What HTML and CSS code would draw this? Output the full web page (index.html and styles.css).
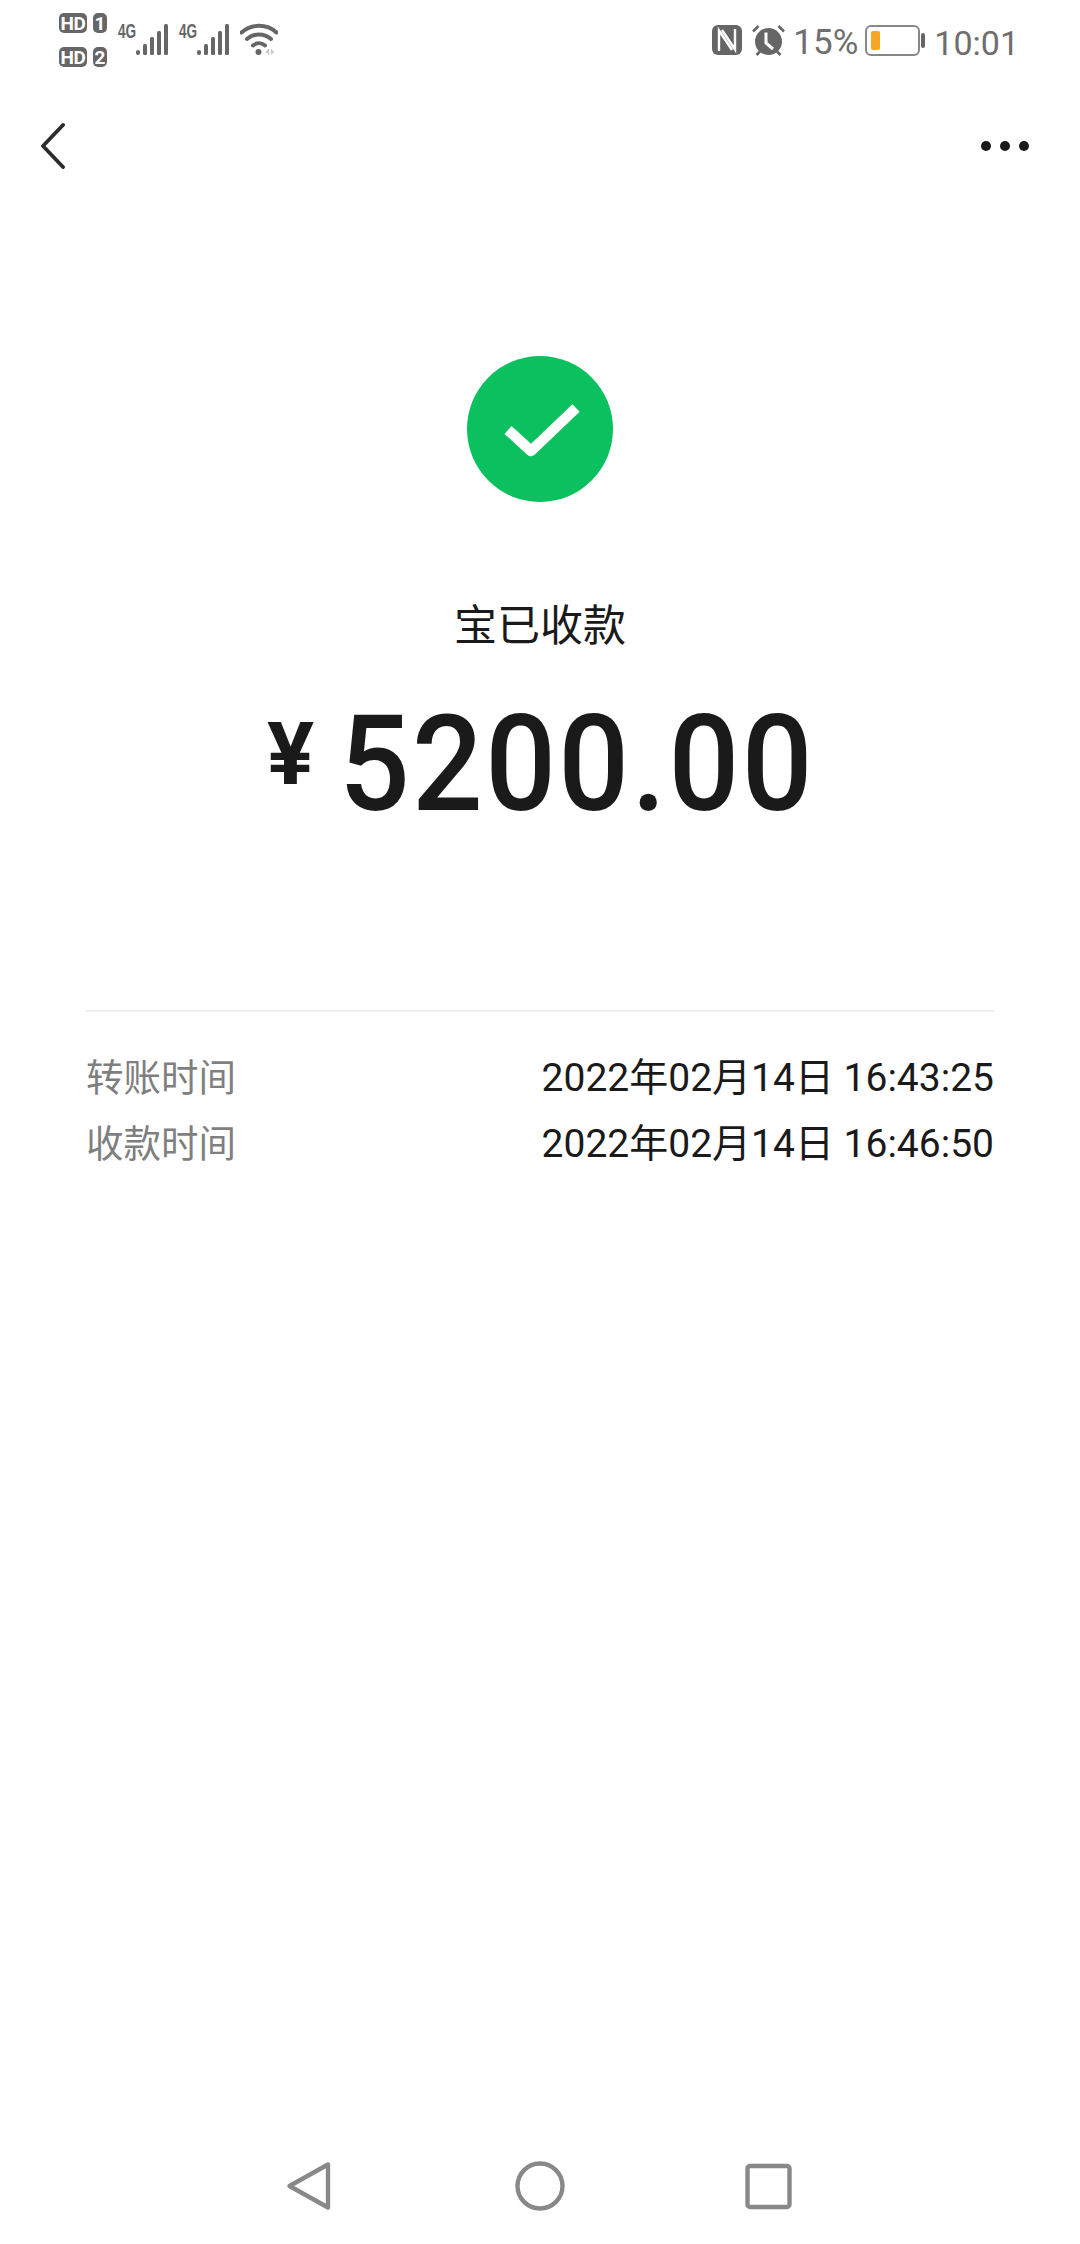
FILE: index.html
```html
<!DOCTYPE html>
<html lang="zh-CN">
<head>
  <meta charset="UTF-8">
  <meta name="viewport" content="width=device-width, initial-scale=1.0">
  <title>转账详情</title>
  <link rel="stylesheet" href="styles.css">
</head>
<body>
  <div id="app">
    <div class="status-bar">
      <div class="status-left">
        <div class="sim-list">
          <div class="sim"><span class="hd">HD</span><span class="slot">1</span></div>
          <div class="sim"><span class="hd">HD</span><span class="slot">2</span></div>
        </div>
        <div class="signal">
          <span class="net">4G</span>
          <svg class="bars" viewBox="0 0 32 32" width="32" height="32">
            <rect x="0" y="26" width="4" height="5" rx="2"/>
            <rect x="7" y="20" width="4" height="11" rx="1.5"/>
            <rect x="14" y="13" width="4" height="18" rx="1.5"/>
            <rect x="21" y="7" width="4" height="24" rx="1.5"/>
            <rect x="28" y="0" width="4" height="31" rx="1.5"/>
          </svg>
        </div>
        <div class="signal">
          <span class="net">4G</span>
          <svg class="bars" viewBox="0 0 32 32" width="32" height="32">
            <rect x="0" y="26" width="4" height="5" rx="2"/>
            <rect x="7" y="20" width="4" height="11" rx="1.5"/>
            <rect x="14" y="13" width="4" height="18" rx="1.5"/>
            <rect x="21" y="7" width="4" height="24" rx="1.5"/>
            <rect x="28" y="0" width="4" height="31" rx="1.5"/>
          </svg>
        </div>
        <svg class="wifi" viewBox="0 0 38 34" width="38" height="34">
          <path d="M1.500 9.500C11 0.500 27 0.500 36.500 9.500" fill="none" stroke="#666" stroke-width="4" stroke-linecap="round"/>
          <path d="M7 16C13.800 10 24.200 10 31 16" fill="none" stroke="#666" stroke-width="4" stroke-linecap="round"/>
          <path d="M13 22.500C16.500 19.500 21.500 19.500 25 22.500" fill="none" stroke="#666" stroke-width="4" stroke-linecap="round"/>
          <circle cx="18.500" cy="29" r="3" fill="#666"/>
          <path d="M28 26l-3 4h3zM28 26v6h1.200v-6zM31 26v6l3.500-3z" fill="#c9c9c9"/>
        </svg>
      </div>
      <div class="status-right">
        <svg class="nfc" viewBox="0 0 30 30" width="30" height="30">
          <rect width="30" height="30" rx="6" fill="#666"/>
          <path d="M7 26V5.500L20 25M23 4v20.500L10 5" fill="none" stroke="#fff" stroke-width="2.400"/>
        </svg>
        <svg class="alarm" viewBox="0 0 33 33" width="33" height="33">
          <circle cx="16.500" cy="17.500" r="13.500" fill="#666"/>
          <path d="M1 7.500L6.500 2M32 7.500L26.500 2M4.500 31l3.500-3.500M28.500 31L25 27.500" stroke="#666" stroke-width="2.600"/>
          <path d="M14 8.500v10.500l7 6" fill="none" stroke="#fff" stroke-width="3"/>
        </svg>
        <span class="percent">15%</span>
        <div class="battery">
          <div class="battery-body"><div class="battery-level"></div></div>
          <div class="battery-cap"></div>
        </div>
        <span class="clock">10:01</span>
      </div>
    </div>

    <div class="toolbar">
      <svg class="back" viewBox="0 0 24 46" width="24" height="46">
        <path d="M22 2L2 23l20 21" fill="none" stroke="#2b2b2b" stroke-width="3.800" stroke-linecap="round" stroke-linejoin="round"/>
      </svg>
      <div class="more"><span></span><span></span><span></span></div>
    </div>

    <div class="result">
      <svg class="check-circle" viewBox="0 0 146 146" width="146" height="146">
        <circle cx="73" cy="73" r="73" fill="#0ac05f"/>
        <path d="M41 74l23 21 45-43" fill="none" stroke="#fff" stroke-width="10.500" stroke-linejoin="round"/>
      </svg>
      <div class="result-title">宝已收款</div>
      <div class="amount"><span class="currency">¥</span><span class="value">5200.00</span></div>
    </div>

    <div class="details">
      <div class="detail-row">
        <span class="detail-label">转账时间</span>
        <span class="detail-value">2022年02月14日 16:43:25</span>
      </div>
      <div class="detail-row">
        <span class="detail-label">收款时间</span>
        <span class="detail-value">2022年02月14日 16:46:50</span>
      </div>
    </div>

    <div class="nav-bar">
      <svg viewBox="0 0 50 50" width="50" height="50">
        <path d="M43 3.500v43L4.500 25z" fill="none" stroke="#888" stroke-width="4.400" stroke-linejoin="round"/>
      </svg>
      <svg viewBox="0 0 50 50" width="50" height="50">
        <circle cx="25" cy="25" r="22.500" fill="none" stroke="#888" stroke-width="4.400"/>
      </svg>
      <svg viewBox="0 0 50 50" width="50" height="50">
        <rect x="2.500" y="5" width="42" height="41" rx="2.500" fill="none" stroke="#888" stroke-width="4.400"/>
      </svg>
    </div>
  </div>
</body>
</html>
```

FILE: styles.css
```css
body {
  margin: 0;
  padding: 0;
  background-color: #fff;
  font-family: Roboto, 'Noto Sans CJK SC', sans-serif;
  color: #1a1a1a;
}

#app {
  width: 1080px;
  height: 2244px;
  display: flex;
  flex-direction: column;
  overflow: hidden;
}

.status-bar {
  height: 80px;
  display: flex;
  justify-content: space-between;
  align-items: center;
  padding: 0 61px 0 59px;
  color: #666;
}

.status-left, .status-right {
  display: flex;
  align-items: center;
}

.sim-list {
  display: flex;
  flex-direction: column;
  gap: 14px;
  margin-right: 11px;
}

.sim {
  display: flex;
  gap: 6px;
}

.hd, .slot {
  height: 20px;
  line-height: 21px;
  background: #666;
  color: #fff;
  border-radius: 5px;
  font-size: 19px;
  font-weight: 700;
  text-align: center;
}

.hd {
  width: 28px;
  letter-spacing: -0.5px;
}

.slot {
  width: 14px;
}

.signal {
  display: flex;
  margin-right: 11px;
}

.bars {
  fill: #666;
}

.net {
  width: 18px;
  font-family: 'Liberation Sans', sans-serif;
  font-size: 20px;
  font-weight: 700;
  transform: scaleX(0.68);
  transform-origin: left top;
  line-height: 14px;
  color: #666;
}

.status-right svg {
  flex: none;
}

.alarm {
  margin-left: 10px;
}

.percent, .clock {
  line-height: 40px;
  padding-top: 5px;
  color: #6e6e6e;
}

.percent {
  font-size: 35px;
  margin-left: 8px;
}

.clock {
  font-size: 34px;
  margin-left: 9px;
}

.battery {
  display: flex;
  align-items: center;
  margin-left: 7px;
}

.battery-body {
  box-sizing: border-box;
  width: 55px;
  height: 31px;
  border: 2px solid #888;
  border-radius: 6px;
  padding: 4px;
}

.battery-level {
  width: 9px;
  height: 100%;
  background: #f5a623;
  border-radius: 2px;
}

.battery-cap {
  width: 4px;
  height: 15px;
  margin-left: 1px;
  background: #666;
  border-radius: 2px;
}

.toolbar {
  height: 132px;
  display: flex;
  justify-content: space-between;
  align-items: center;
  padding: 0 51px 0 41px;
}

.more {
  display: flex;
  gap: 9px;
}

.more span {
  width: 10px;
  height: 10px;
  background: #1a1a1a;
  border-radius: 50%;
}

.result {
  display: flex;
  flex-direction: column;
  align-items: center;
  padding-top: 144px;
}

.check-circle {
  display: block;
}

.result-title {
  margin-top: 94px;
  font-size: 43px;
  line-height: 60px;
}

.amount {
  margin-top: 39px;
  height: 140px;
  padding-left: 20px;
  display: flex;
  align-items: center;
}

.currency {
  font-size: 88px;
  font-weight: 700;
  line-height: 140px;
  margin-right: 7px;
  position: relative;
  top: -11px;
}

.value {
  font-size: 134px;
  font-weight: 500;
  letter-spacing: 2.500px;
  line-height: 140px;
  transform: scaleX(0.93);
}

.details {
  margin: 175px 86px 0;
  padding-top: 33px;
  border-top: 2px solid #eee;
}

.detail-row {
  display: flex;
  justify-content: space-between;
  font-size: 39px;
  line-height: 66px;
}

.detail-label {
  color: #7f7f7f;
  font-size: 37.500px;
}

.nav-bar {
  margin-top: auto;
  display: flex;
  justify-content: center;
  gap: 180px;
  padding-bottom: 33px;
}
```
